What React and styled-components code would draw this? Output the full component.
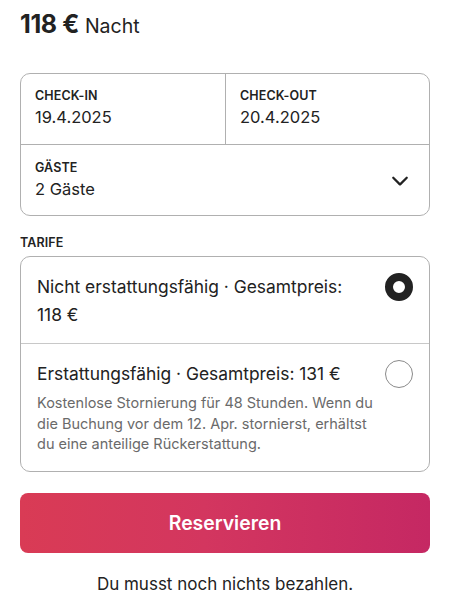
import React from "react";
import styled, { createGlobalStyle } from "styled-components";

const GlobalStyle = createGlobalStyle`
  html, body {
    margin: 0;
    padding: 0;
    background: #ffffff;
  }
  body {
    font-family: Inter, "Noto Sans", sans-serif;
    color: #222222;
    -webkit-font-smoothing: antialiased;
  }
`;

const Page = styled.div`
  width: 450px;
  box-sizing: border-box;
  padding: 9px 20px 0 20px;
  display: flex;
  flex-direction: column;
`;

const PriceLine = styled.div`
  display: flex;
  align-items: baseline;
  gap: 6px;
  height: 34px;
  margin-bottom: 30px;
`;

const Price = styled.span`
  font-size: 25px;
  font-weight: 700;
  letter-spacing: -0.4px;
`;

const Per = styled.span`
  font-size: 19.5px;
  font-weight: 400;
`;

const Box = styled.div`
  border: 1px solid #b0b0b0;
  border-radius: 10px;
  overflow: hidden;
`;

const DateRow = styled.div`
  display: grid;
  grid-template-columns: 1fr 1fr;
  border-bottom: 1px solid #b0b0b0;
`;

const Cell = styled.div`
  padding: 14px 12px 0 14px;
  height: 70px;
  box-sizing: border-box;
  border-left: ${(p) => (p.$divider ? "1px solid #b0b0b0" : "none")};
`;

const GuestCell = styled.div`
  display: flex;
  align-items: center;
  justify-content: space-between;
  height: 70px;
  box-sizing: border-box;
  padding: 0 20px 0 14px;
`;

const Label = styled.div`
  font-size: 12.5px;
  font-weight: 600;
  text-transform: uppercase;
  letter-spacing: 0.1px;
  line-height: 16px;
`;

const Value = styled.div`
  font-size: 16.5px;
  line-height: 22px;
  margin-top: 2px;
`;

const SectionLabel = styled(Label)`
  margin: 19px 0 5px 0;
`;

const Option = styled.div`
  display: flex;
  align-items: flex-start;
  justify-content: space-between;
  gap: 4px;
  padding: ${(p) => p.$pad};
  border-top: ${(p) => (p.$first ? "none" : "1px solid #c8c8c8")};
`;

const OptionText = styled.div`
  flex: 1;
`;

const OptionTitle = styled.div`
  font-size: 17.4px;
  line-height: 28px;
`;

const OptionDesc = styled.div`
  font-size: 14.5px;
  line-height: 20.5px;
  color: #6a6a6a;
  margin-top: 5px;
`;

const Radio = styled.div`
  width: 28px;
  height: 28px;
  flex: none;
  box-sizing: border-box;
  border-radius: 50%;
  margin-top: ${(p) => p.$top};
  border: ${(p) => (p.$checked ? "8.5px solid #222222" : "1px solid #8a8a8a")};
  background: #ffffff;
`;

const ReserveButton = styled.button`
  margin-top: 21px;
  height: 60px;
  width: 100%;
  border: none;
  border-radius: 8px;
  background: linear-gradient(to right, #d93b55 0%, #d3365f 45%, #c52863 100%);
  color: #ffffff;
  font-family: Inter, "Noto Sans", sans-serif;
  font-size: 19.4px;
  font-weight: 600;
  cursor: pointer;
`;

const Note = styled.div`
  text-align: center;
  font-size: 17px;
  margin-top: 21px;
`;

const Chevron = () => (
  <svg width="18" height="18" viewBox="0 0 32 32" fill="none">
    <path
      d="M28 12 16.7 23.3a1 1 0 0 1-1.4 0L4 12"
      stroke="#222222"
      strokeWidth="4"
      strokeLinecap="round"
      strokeLinejoin="round"
    />
  </svg>
);

export default function App() {
  return (
    <>
      <GlobalStyle />
      <Page>
        <PriceLine>
          <Price>118 €</Price>
          <Per>Nacht</Per>
        </PriceLine>

        <Box>
          <DateRow>
            <Cell>
              <Label>Check-in</Label>
              <Value>19.4.2025</Value>
            </Cell>
            <Cell $divider>
              <Label>Check-out</Label>
              <Value>20.4.2025</Value>
            </Cell>
          </DateRow>
          <GuestCell>
            <div>
              <Label>Gäste</Label>
              <Value>2 Gäste</Value>
            </div>
            <Chevron />
          </GuestCell>
        </Box>

        <SectionLabel>Tarife</SectionLabel>
        <Box>
          <Option $first $pad="16px 16px 14px 16px">
            <OptionText>
              <OptionTitle>
                Nicht erstattungsfähig · Gesamtpreis:
                <br />
                118 €
              </OptionTitle>
            </OptionText>
            <Radio $checked $top="0px" />
          </Option>
          <Option $pad="16px 16px 16px 16px">
            <OptionText>
              <OptionTitle>Erstattungsfähig · Gesamtpreis: 131 €</OptionTitle>
              <OptionDesc>
                Kostenlose Stornierung für 48 Stunden. Wenn du die Buchung vor
                dem 12. Apr. stornierst, erhältst du eine anteilige
                Rückerstattung.
              </OptionDesc>
            </OptionText>
            <Radio $top="0px" />
          </Option>
        </Box>

        <ReserveButton>Reservieren</ReserveButton>
        <Note>Du musst noch nichts bezahlen.</Note>
      </Page>
    </>
  );
}
